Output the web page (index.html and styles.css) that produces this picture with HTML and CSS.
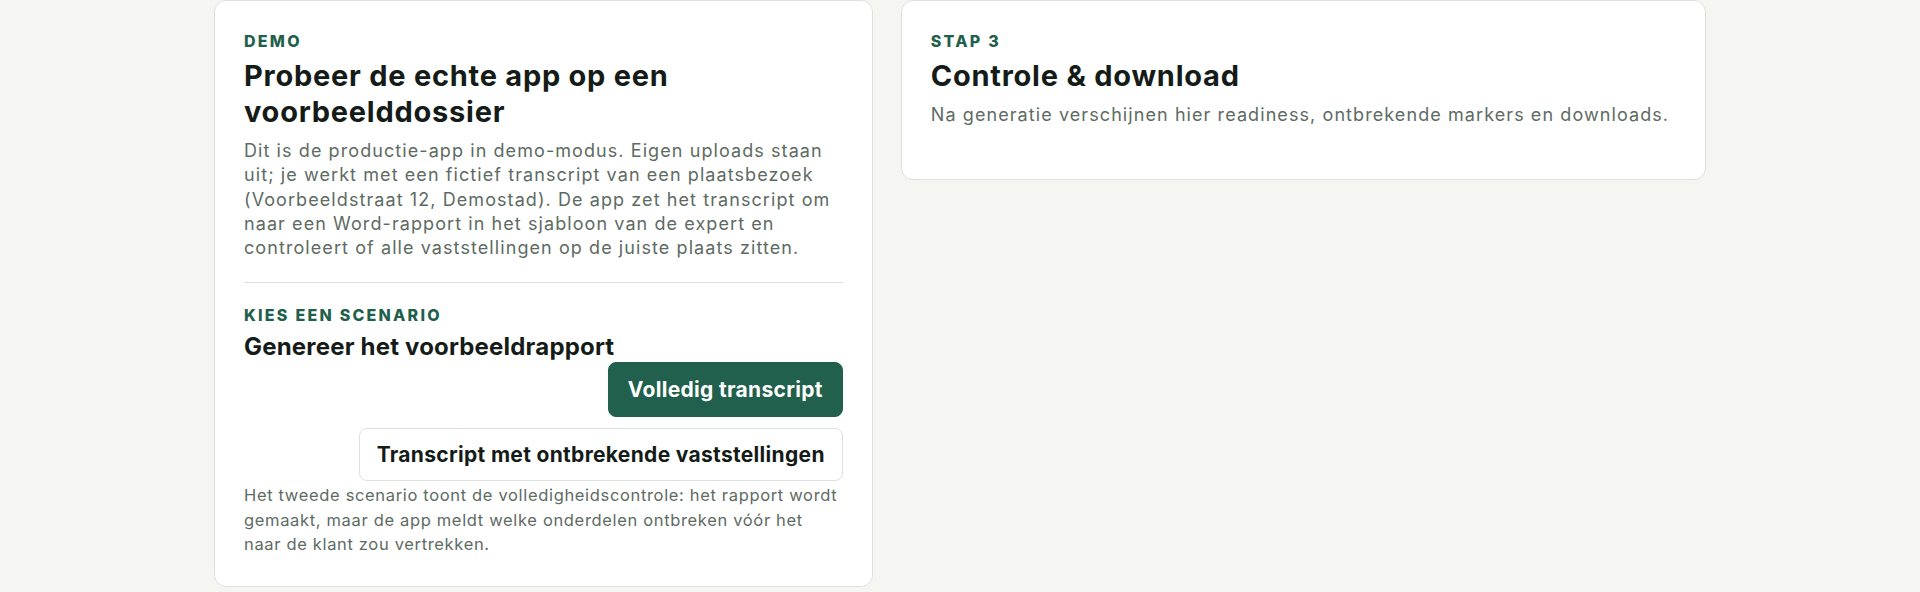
FILE: index.html
```html
<!DOCTYPE html>
<html lang="nl">

<head>
    <meta charset="UTF-8">
    <meta name="viewport" content="width=device-width, initial-scale=1.0">
    <title>Rapportgenerator demo</title>
    <link rel="stylesheet" href="styles.css">
</head>

<body>

    <main class="workspace">
        <section class="card demo-card">
            <p class="eyebrow">Demo</p>
            <h1 class="card-title">Probeer de echte app op een voorbeelddossier</h1>
            <p class="lead">Dit is de productie-app in demo-modus. Eigen uploads staan uit; je werkt met een fictief transcript van een plaatsbezoek (Voorbeeldstraat 12, Demostad). De app zet het transcript om naar een Word-rapport in het sjabloon van de expert en controleert of alle vaststellingen op de juiste plaats zitten.</p>

            <hr class="divider">

            <p class="eyebrow">Kies een scenario</p>
            <h2 class="section-title">Genereer het voorbeeldrapport</h2>

            <div class="scenario-actions">
                <button type="button" class="btn btn-primary">Volledig transcript</button>
                <button type="button" class="btn btn-secondary">Transcript met ontbrekende vaststellingen</button>
            </div>

            <p class="note">Het tweede scenario toont de volledigheidscontrole: het rapport wordt gemaakt, maar de app meldt welke onderdelen ontbreken vóór het naar de klant zou vertrekken.</p>
        </section>

        <section class="card result-card">
            <p class="eyebrow">Stap 3</p>
            <h2 class="card-title">Controle &amp; download</h2>
            <p class="lead">Na generatie verschijnen hier readiness, ontbrekende markers en downloads.</p>
            <div id="output" class="output"></div>
        </section>
    </main>

</body>

</html>
```

FILE: styles.css
```css
body {
    font-family: 'Inter', 'Noto Sans', sans-serif;
    background-color: #f5f5f2;
    color: #151c18;
    margin: 0;
    padding: 0;
}

.workspace {
    width: 1492px;
    margin: 0 auto;
    display: grid;
    grid-template-columns: 9fr 11fr;
    gap: 28px;
    align-items: start;
}

.card {
    background-color: #fff;
    border: 1px solid #dde1dc;
    border-radius: 12px;
    padding: 29px;
}

.eyebrow {
    margin: 0;
    font-size: 16px;
    line-height: 22px;
    font-weight: 800;
    letter-spacing: 0.14em;
    text-transform: uppercase;
    color: #1f5f4b;
}

.card-title {
    margin: 6px 0 0;
    font-size: 29px;
    line-height: 36px;
    font-weight: 700;
    letter-spacing: 0.026em;
}

.lead {
    margin: 9px 0 0;
    font-size: 18px;
    line-height: 24.3px;
    letter-spacing: 0.06em;
    color: #5e6b63;
}

.divider {
    border: none;
    border-top: 1px solid #dde1dc;
    margin: 22px 0 21px;
}

.section-title {
    margin: 6px 0 0;
    font-size: 24px;
    line-height: 30px;
    font-weight: 700;
    letter-spacing: 0.008em;
}

.scenario-actions {
    display: flex;
    flex-direction: column;
    align-items: flex-end;
    gap: 11px;
}

.btn {
    font-family: inherit;
    font-size: 21px;
    line-height: 25px;
    font-weight: 700;
    letter-spacing: 0.015em;
    padding: 14px 19px;
    border-radius: 8px;
    border: 1px solid #dde1dc;
    cursor: pointer;
}

.btn-primary {
    background-color: #20604c;
    border-color: #20604c;
    color: #fff;
}

.btn-secondary {
    background-color: #fff;
    color: #151c18;
    padding: 13px 17px;
}

.note {
    margin: 2px 0 0;
    font-size: 16.5px;
    line-height: 24.5px;
    letter-spacing: 0.04em;
    color: #5e6b63;
}

.output {
    min-height: 23px;
}
```
